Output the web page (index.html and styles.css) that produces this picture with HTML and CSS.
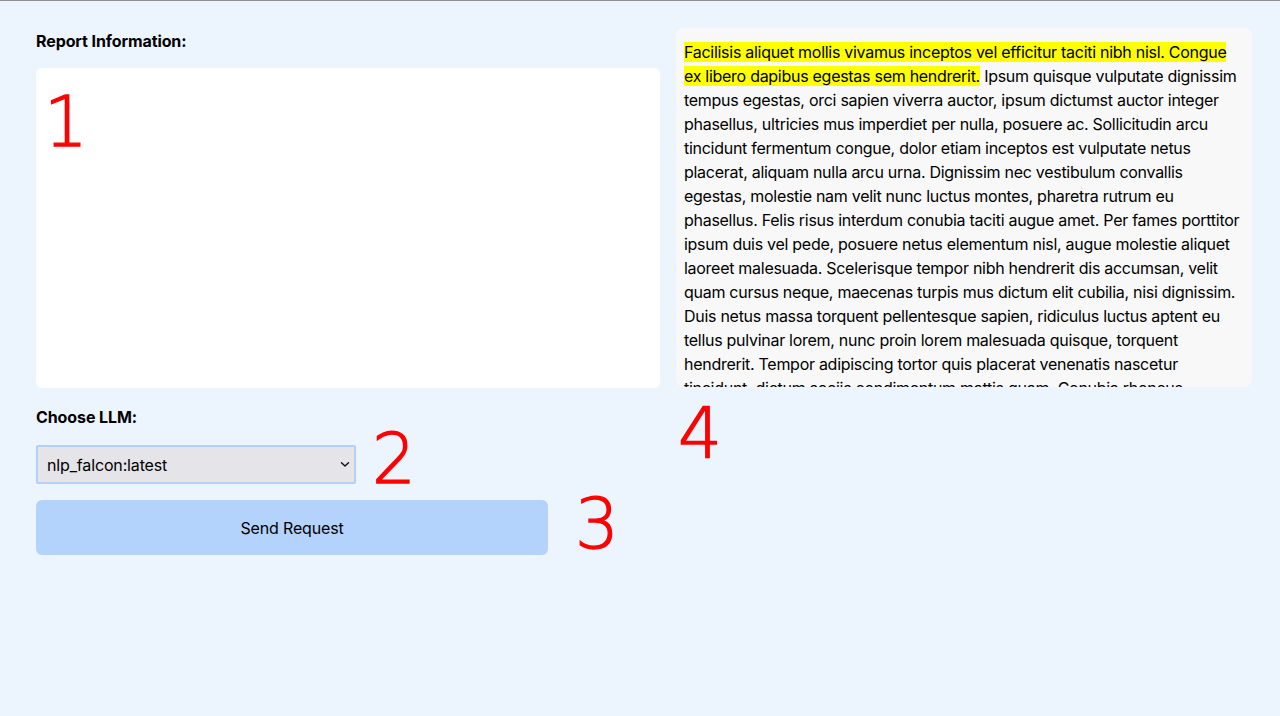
FILE: index.html
```html
<!DOCTYPE html>
<html lang="en">
<head>
<meta charset="utf-8">
<title>Report</title>
<link rel="stylesheet" href="styles.css">
</head>
<body>
<div class="page">
  <div class="left">
    <label class="label label-report" for="report">Report Information:</label>
    <textarea id="report" class="report"></textarea>
    <label class="label label-llm" for="llm">Choose LLM:</label>
    <div class="select-wrap">
      <select id="llm" class="select">
        <option>nlp_falcon:latest</option>
      </select>
      <svg class="chevron" width="10" height="7" viewBox="0 0 10 7"><path d="M1.5 1.8 L5 5 L8.5 1.8" fill="none" stroke="#111" stroke-width="1.5" stroke-linecap="round" stroke-linejoin="round"/></svg>
    </div>
    <button class="send">Send Request</button>
  </div>
  <div class="right">
    <div class="output"><span class="hl">Facilisis aliquet mollis vivamus inceptos vel efficitur taciti nibh nisl. Congue ex libero dapibus egestas sem hendrerit.</span> Ipsum quisque vulputate dignissim tempus egestas, orci sapien viverra auctor, ipsum dictumst auctor integer phasellus, ultricies mus imperdiet per nulla, posuere ac. Sollicitudin arcu tincidunt fermentum congue, dolor etiam inceptos est vulputate netus placerat, aliquam nulla arcu urna. Dignissim nec vestibulum convallis egestas, molestie nam velit nunc luctus montes, pharetra rutrum eu phasellus. Felis risus interdum conubia taciti augue amet. Per fames porttitor ipsum duis vel pede, posuere netus elementum nisl, augue molestie aliquet laoreet malesuada. Scelerisque tempor nibh hendrerit dis accumsan, velit quam cursus neque, maecenas turpis mus dictum elit cubilia, nisi dignissim. Duis netus massa torquent pellentesque sapien, ridiculus luctus aptent eu tellus pulvinar lorem, nunc proin lorem malesuada quisque, torquent hendrerit. Tempor adipiscing tortor quis placerat venenatis nascetur tincidunt, dictum sociis condimentum mattis quam. Conubia rhoncus pellentesque, vitae curae facilisis est.</div>
  </div>
  <span class="mark mark-1">1</span>
  <span class="mark mark-2">2</span>
  <span class="mark mark-3">3</span>
  <span class="mark mark-4">4</span>
</div>
</body>
</html>
```
FILE: styles.css
```css
html, body {
  margin: 0;
  padding: 0;
}
body {
  background: #ecf4fe;
  border-top: 1px solid #8e8e93;
  font-family: Inter, "Liberation Sans", sans-serif;
  color: #000;
  height: 715px;
  overflow: hidden;
}
.page {
  position: relative;
  display: grid;
  grid-template-columns: 624px 576px;
  column-gap: 16px;
  padding: 27px 28px 0 36px;
}
.left {
  display: flex;
  flex-direction: column;
  align-items: flex-start;
}
.label {
  font-size: 16px;
  font-weight: 700;
  line-height: 20px;
  letter-spacing: -0.1px;
}
.label-report {
  margin-top: 3px;
  margin-bottom: 17px;
}
.report {
  box-sizing: border-box;
  width: 624px;
  height: 320px;
  border: none;
  border-radius: 6px;
  background: #fff;
  resize: none;
  outline: none;
  margin: 0;
}
.label-llm {
  margin-top: 19px;
  margin-bottom: 18px;
}
.select-wrap {
  position: relative;
  width: 320px;
  height: 39px;
}
.select {
  appearance: none;
  -webkit-appearance: none;
  box-sizing: border-box;
  width: 320px;
  height: 39px;
  margin: 0;
  padding: 0 0 0 9px;
  background: #e4e4e9;
  border: 2px solid #b3d1f8;
  border-radius: 2px;
  font-family: Inter, "Liberation Sans", sans-serif;
  font-size: 16px;
  letter-spacing: -0.15px;
  color: #000;
}
.chevron {
  position: absolute;
  right: 6px;
  top: 16px;
  pointer-events: none;
}
.send {
  margin-top: 16px;
  width: 512px;
  height: 55px;
  border: none;
  border-radius: 6px;
  background: #b3d3fc;
  font-family: Inter, "Liberation Sans", sans-serif;
  font-size: 16px;
  letter-spacing: -0.15px;
  color: #000;
}
.output {
  box-sizing: border-box;
  height: 359px;
  overflow: hidden;
  background: #f8f8f8;
  border-radius: 8px;
  padding: 12px 10px 0 8px;
  font-size: 16px;
  line-height: 24px;
  letter-spacing: -0.28px;
}
.hl {
  background: #ffff00;
}
.mark {
  position: absolute;
  font-family: "DejaVu Sans", sans-serif;
  font-weight: 200;
  font-size: 69px;
  line-height: 1;
  color: #ff0000;
  -webkit-text-stroke: 1.3px #ff0000;
}
.mark-1 { left: 44px; top: 87px; }
.mark-2 { left: 372px; top: 424px; }
.mark-3 { left: 575px; top: 489px; }
.mark-4 { left: 678px; top: 398px; }
```
